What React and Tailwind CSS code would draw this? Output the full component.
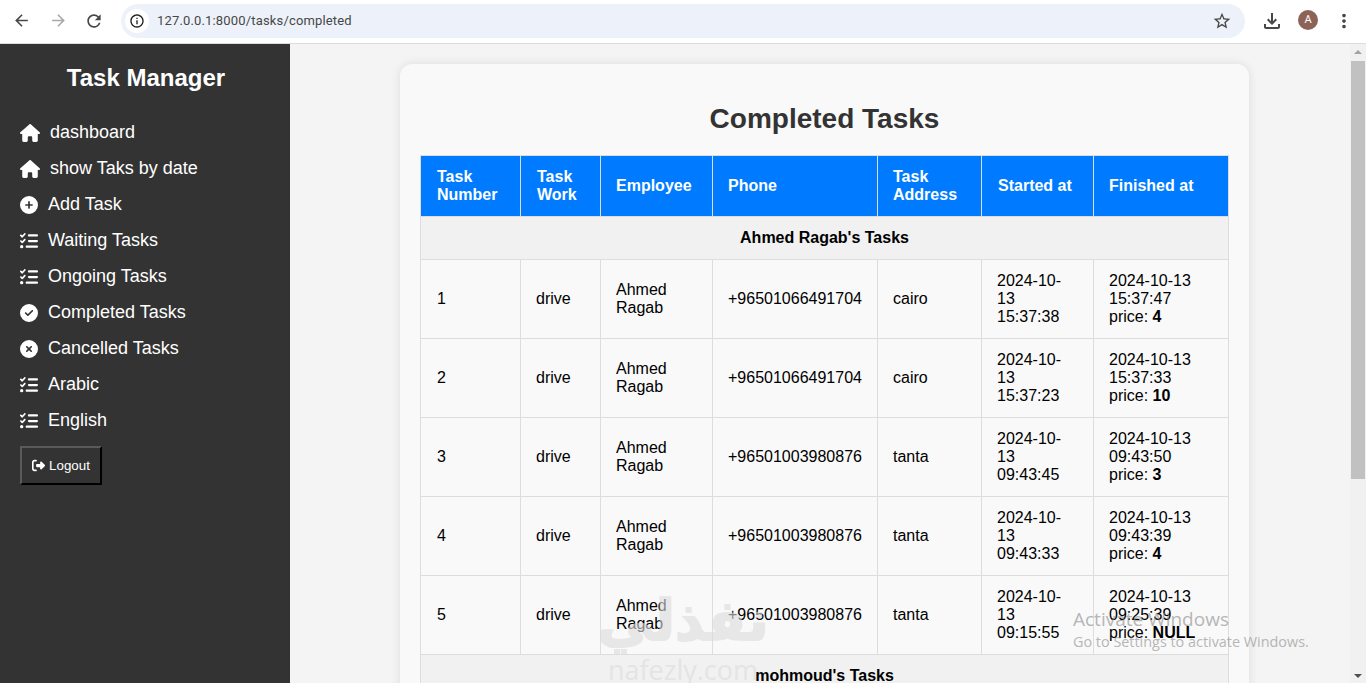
import React from 'react';
import { FaHouse, FaCirclePlus, FaListCheck, FaCircleCheck, FaCircleXmark, FaRightFromBracket } from 'react-icons/fa6';
import { MdArrowBack, MdArrowForward, MdRefresh, MdOutlineInfo, MdStarBorder, MdOutlineFileDownload, MdMoreVert } from 'react-icons/md';

const navItems = [
  { label: 'dashboard', icon: FaHouse, size: 'text-[20px]' },
  { label: 'show Taks by date', icon: FaHouse, size: 'text-[20px]' },
  { label: 'Add Task', icon: FaCirclePlus, size: 'text-[18px]' },
  { label: 'Waiting Tasks', icon: FaListCheck, size: 'text-[18px]' },
  { label: 'Ongoing Tasks', icon: FaListCheck, size: 'text-[18px]' },
  { label: 'Completed Tasks', icon: FaCircleCheck, size: 'text-[18px]' },
  { label: 'Cancelled Tasks', icon: FaCircleXmark, size: 'text-[18px]' },
  { label: 'Arabic', icon: FaListCheck, size: 'text-[18px]' },
  { label: 'English', icon: FaListCheck, size: 'text-[18px]' },
];

const headers = [
  { label: 'Task Number', width: 'w-[100px] pl-4' },
  { label: 'Task Work', width: 'w-[80px] pl-4' },
  { label: 'Employee', width: 'w-[112px]' },
  { label: 'Phone', width: 'w-[165px]' },
  { label: 'Task Address', width: 'w-[104px]' },
  { label: 'Started at', width: 'w-[112px] pl-4' },
  { label: 'Finished at', width: 'w-[135px]' },
];

const tasks = [
  { id: 1, phone: '+96501066491704', address: 'cairo', started: '2024-10-13 15:37:38', finished: '2024-10-13 15:37:47', price: '4' },
  { id: 2, phone: '+96501066491704', address: 'cairo', started: '2024-10-13 15:37:23', finished: '2024-10-13 15:37:33', price: '10' },
  { id: 3, phone: '+96501003980876', address: 'tanta', started: '2024-10-13 09:43:45', finished: '2024-10-13 09:43:50', price: '3' },
  { id: 4, phone: '+96501003980876', address: 'tanta', started: '2024-10-13 09:43:33', finished: '2024-10-13 09:43:39', price: '4' },
  { id: 5, phone: '+96501003980876', address: 'tanta', started: '2024-10-13 09:15:55', finished: '2024-10-13 09:25:39', price: 'NULL' },
];

const cell = 'border border-[#ddd] px-[15px] py-3 text-left align-middle';

const BrowserBar = () => (
  <div className="flex h-[44px] items-center border-b border-[#dadce0] bg-white pb-[2px] text-[#474747]">
    <MdArrowBack className="ml-[12px] text-[19px]" />
    <MdArrowForward className="ml-[18px] text-[19px] text-[#a8a8a8]" />
    <MdRefresh className="ml-[16px] text-[20px]" />
    <div className="ml-[17px] flex h-[34px] w-[1124px] items-center rounded-full bg-[#edf2fa] pl-[4px] pr-[13px]">
      <span className="flex h-[24px] w-[24px] items-center justify-center rounded-full bg-white">
        <MdOutlineInfo className="text-[16px] text-[#1f1f1f]" />
      </span>
      <span className="ml-[8px] flex-1 font-['Roboto',sans-serif] text-[13px] tracking-[0.16px] text-[#474747]">127.0.0.1:8000/tasks/completed</span>
      <MdStarBorder className="text-[20px]" />
    </div>
    <MdOutlineFileDownload className="ml-[15px] text-[24px]" />
    <span className="mb-[1px] ml-[14px] flex h-[20px] w-[20px] items-center justify-center rounded-full bg-[#8d6358] font-['Roboto',sans-serif] text-[11px] text-white">A</span>
    <MdMoreVert className="ml-[15px] text-[22px]" />
  </div>
);

const Sidebar = () => (
  <aside className="w-[290px] shrink-0 bg-[#333] px-5 pt-5 text-white">
    <h2 className="mb-[22px] pl-[2px] text-center text-[24px] font-bold leading-[28px]">Task Manager</h2>
    <ul>
      {navItems.map(({ label, icon: Icon, size }) => (
        <li key={label} className="flex h-[36px] items-center gap-[10px] text-[18px] leading-[20px]">
          <Icon className={`mt-[2px] shrink-0 ${size}`} />
          <span>{label}</span>
        </li>
      ))}
    </ul>
    <button className="mt-[8px] flex h-[39px] w-[82px] items-center justify-center gap-[4px] border-2 border-t-[#5a5a5a] border-l-[#5a5a5a] border-r-black border-b-black bg-[#333] text-[13.33px] font-medium text-white">
      <FaRightFromBracket className="text-[13px]" />
      Logout
    </button>
  </aside>
);

const TaskTable = () => (
  <table className="w-[809px] table-fixed border-collapse text-[16px] leading-[18px] text-black">
    <thead>
      <tr>
        {headers.map((h) => (
          <th key={h.label} className={`${cell} ${h.width} bg-[#007bff] font-bold text-white`}>{h.label}</th>
        ))}
      </tr>
    </thead>
    <tbody>
      <tr>
        <td colSpan={7} className={`${cell} bg-[#f1f1f1] text-center! font-bold`}>Ahmed Ragab's Tasks</td>
      </tr>
      {tasks.map((t) => (
        <tr key={t.id}>
          <td className={`${cell} pl-4`}>{t.id}</td>
          <td className={cell}>drive</td>
          <td className={cell}>Ahmed Ragab</td>
          <td className={cell}>{t.phone}</td>
          <td className={cell}>{t.address}</td>
          <td className={cell}>{t.started}</td>
          <td className={cell}>
            {t.finished}
            <br />
            price: <b>{t.price}</b>
          </td>
        </tr>
      ))}
      <tr>
        <td colSpan={7} className={`${cell} bg-[#f1f1f1] text-center! font-bold`}>mohmoud's Tasks</td>
      </tr>
    </tbody>
  </table>
);

const Scrollbar = () => (
  <div className="flex w-[16px] shrink-0 flex-col items-center justify-between bg-[#f1f1f1]">
    <div className="flex w-full flex-col items-center">
      <span className="mt-[6px] h-0 w-0 border-x-[4px] border-b-[4px] border-x-transparent border-b-[#a3a3a3]" />
      <span className="mt-[7px] h-[418px] w-[14px] bg-[#c1c1c1]" />
    </div>
    <span className="mb-[5px] h-0 w-0 border-x-[4px] border-t-[4px] border-x-transparent border-t-[#505050]" />
  </div>
);

export default function App() {
  return (
    <div className="relative flex h-[683px] flex-col overflow-hidden font-['Liberation_Sans',Arial,sans-serif]">
      <BrowserBar />
      <div className="flex min-h-0 flex-1">
        <Sidebar />
        <main className="min-w-0 flex-1 overflow-hidden bg-[#f4f4f4] pl-[110px] pt-5">
          <section className="w-[849px] rounded-[12px] bg-[#f9f9f9] px-5 pb-5 pt-[38px] shadow-[0_0_10px_rgba(0,0,0,0.1)]">
            <h1 className="mb-[20px] text-center text-[28px] font-bold leading-[33px] text-[#333]">Completed Tasks</h1>
            <TaskTable />
          </section>
        </main>
        <Scrollbar />
      </div>

      {/* nafezly watermark */}
      <div className="pointer-events-none absolute left-[598px] top-[588px] flex w-[170px] flex-col items-center text-[#dcdcdc] opacity-60">
        <span className="font-['DejaVu_Sans',sans-serif] text-[56px] font-bold leading-[66px] [-webkit-text-stroke:2px_#dcdcdc]" dir="rtl">نفذلي</span>
        <span className="mt-[4px] font-['Open_Sans',sans-serif] text-[27px] leading-[24px]">nafezly.com</span>
      </div>

      {/* windows activation notice */}
      <div className="pointer-events-none absolute left-[1073px] top-[607px] font-['Open_Sans',sans-serif] text-[#8a8a8a] opacity-60">
        <p className="text-[19px] leading-[25px]">Activate Windows</p>
        <p className="text-[14.4px] leading-[20px]">Go to Settings to activate Windows.</p>
      </div>
    </div>
  );
}
